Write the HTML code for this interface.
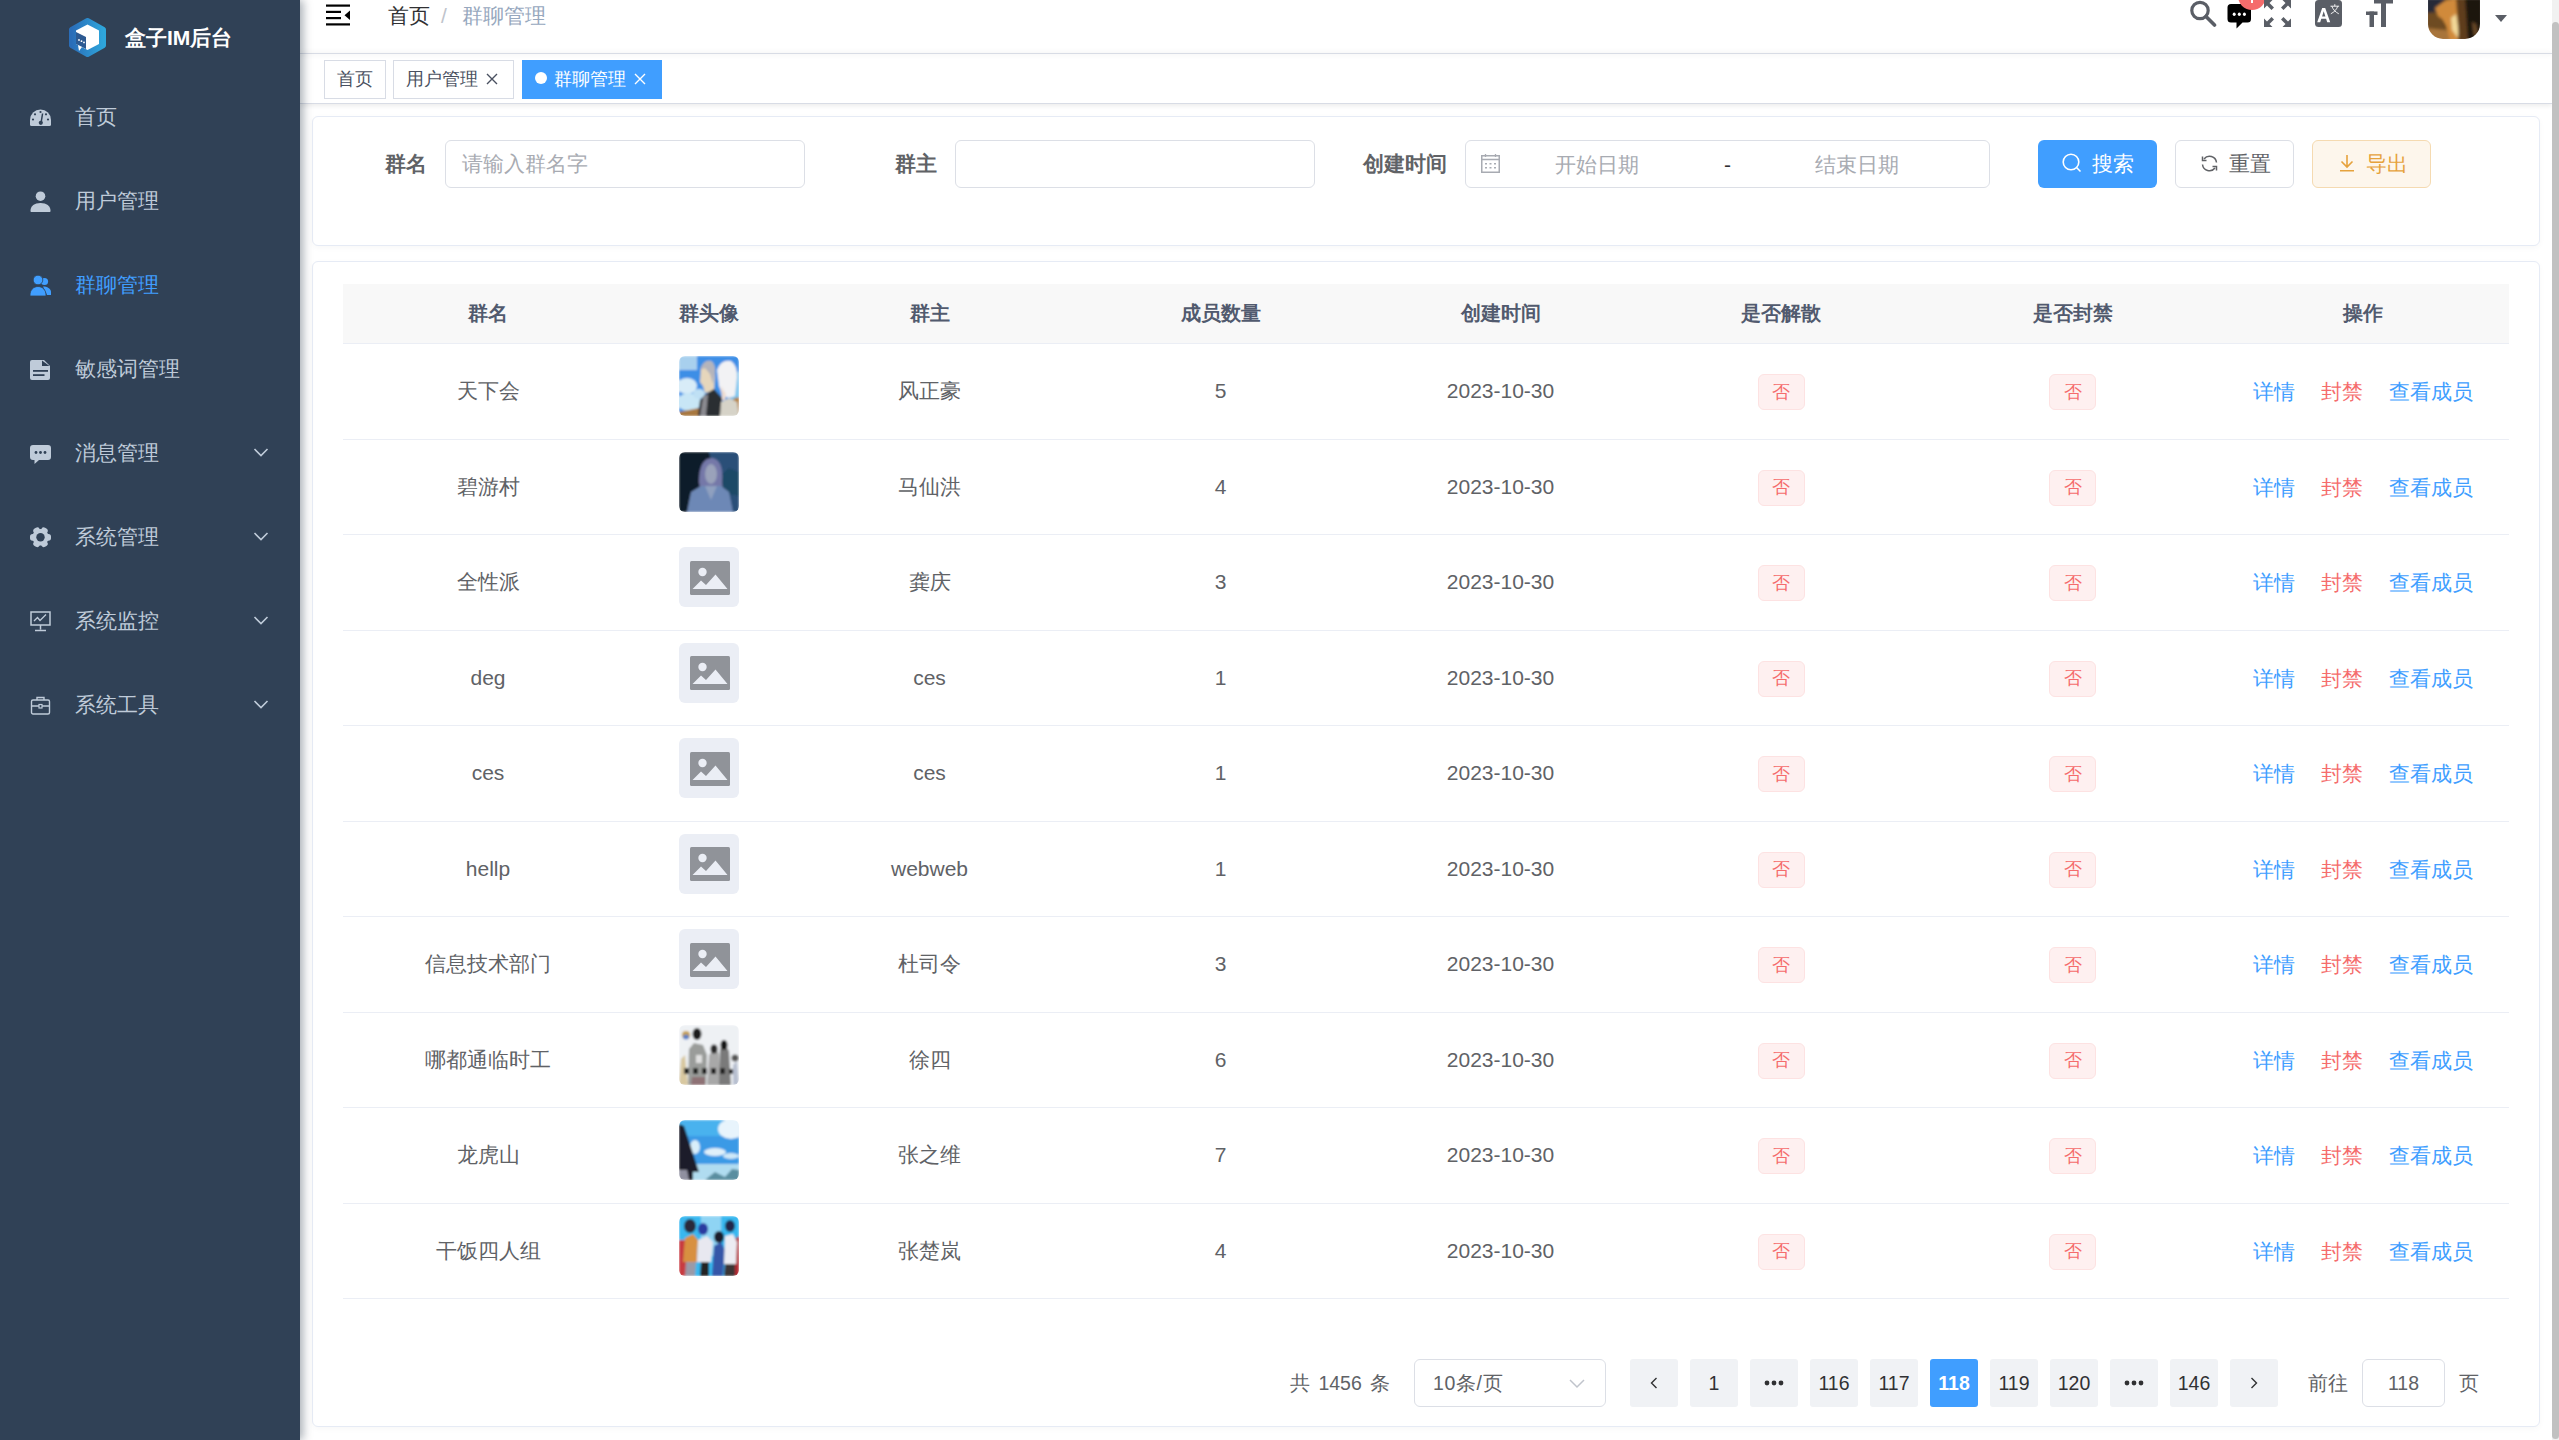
<!DOCTYPE html>
<html><head><meta charset="utf-8">
<style>
*{box-sizing:border-box;margin:0;padding:0}
html,body{width:2559px;height:1440px;overflow:hidden;background:#fff}
body{position:relative;font-family:"Liberation Sans",sans-serif;color:#606266}
.a{position:absolute}
.t{position:absolute;white-space:nowrap;line-height:1}
#side{left:0;top:0;width:300px;height:1440px;background:#304156;box-shadow:3px 0 9px rgba(0,21,41,.35);z-index:5}
.mi{position:absolute;left:0;width:300px;height:84px}
.mi svg.ic{position:absolute;left:30px;top:32px;width:21px;height:21px}
.mi .tx{position:absolute;left:75px;top:31px;font-size:21px;line-height:21px;color:#bfcbd9;white-space:nowrap}
.mi .ch{position:absolute;left:253px;top:35px;width:16px;height:12px}
</style></head>
<body>
<!-- SIDEBAR -->
<div id="side" class="a">
  <svg class="a" style="left:68px;top:18px" width="39" height="39" viewBox="0 0 39 39">
    <defs><linearGradient id="lg" x1="0" y1="0" x2="1" y2="0"><stop offset="0" stop-color="#2a6db8"/><stop offset="1" stop-color="#2ea6dc"/></linearGradient></defs>
    <polygon points="19.5,2.5 35.5,11.5 35.5,27.5 19.5,36.5 3.5,27.5 3.5,11.5" fill="url(#lg)" stroke="url(#lg)" stroke-width="5" stroke-linejoin="round"/>
    <polygon points="19.5,6.5 31,12.5 31,26 19.5,32 8,26 8,12.5" fill="#fff"/>
    <polygon points="8,14 18,19 18,31 8,26" fill="#2d5a92"/>
    <polygon points="10,27 14,29 11,33" fill="#fff"/>
    <circle cx="11" cy="22" r="0.9" fill="#fff"/><circle cx="13.5" cy="23.2" r="0.9" fill="#fff"/><circle cx="16" cy="24.4" r="0.9" fill="#fff"/>
  </svg>
  <div class="t" style="left:125px;top:27px;font-size:21px;line-height:21px;font-weight:bold;color:#fff">盒子IM后台</div>

  <div class="mi" style="top:75px">
    <svg class="ic" viewBox="0 0 21 21"><path d="M0 13A10.5 10.5 0 0 1 21 13V17.5Q21 19 19.5 19H1.5Q0 19 0 17.5Z" fill="#bfcbd9"/><circle cx="10.5" cy="5" r="1.1" fill="#304156"/><circle cx="5" cy="7.3" r="1.1" fill="#304156"/><circle cx="16" cy="7.3" r="1.1" fill="#304156"/><circle cx="3" cy="12.5" r="1.1" fill="#304156"/><circle cx="18" cy="12.5" r="1.1" fill="#304156"/><path d="M12.6 6.5L11.2 15" stroke="#304156" stroke-width="1.5"/><circle cx="10.8" cy="15.8" r="2.1" fill="#304156"/></svg>
    <div class="tx">首页</div>
  </div>
  <div class="mi" style="top:159px">
    <svg class="ic" viewBox="0 0 21 21"><circle cx="10.5" cy="5.2" r="4.8" fill="#bfcbd9"/><path d="M0.5 19.5c0-4.5 4-7.5 10-7.5s10 3 10 7.5v0.5c0 0.6-0.4 1-1 1h-18c-0.6 0-1-0.4-1-1z" fill="#bfcbd9"/></svg>
    <div class="tx">用户管理</div>
  </div>
  <div class="mi" style="top:243px">
    <svg class="ic" viewBox="0 0 21 21"><circle cx="14.5" cy="6.5" r="3.6" fill="#409EFF"/><path d="M13 11.5c4 0 8 2 8 5.5v3h-4z" fill="#409EFF"/><circle cx="8" cy="5" r="4.8" fill="#409EFF" stroke="#304156" stroke-width="0.8"/><path d="M0 20c0-5 3.5-8.5 8-8.5s8 3.5 8 8.5v1H0z" fill="#409EFF" stroke="#304156" stroke-width="0.8"/></svg>
    <div class="tx" style="color:#409EFF">群聊管理</div>
  </div>
  <div class="mi" style="top:327px">
    <svg class="ic" viewBox="0 0 21 21"><path d="M2 1h12l6 6v12a2 2 0 0 1-2 2H2a2 2 0 0 1-2-2V3a2 2 0 0 1 2-2z" fill="#bfcbd9"/><path d="M12 1.5v5.5h7.5z" fill="#304156"/><rect x="3" y="11" width="15" height="1.8" fill="#304156"/><rect x="3" y="15.2" width="11.5" height="1.8" fill="#304156"/></svg>
    <div class="tx">敏感词管理</div>
  </div>
  <div class="mi" style="top:411px">
    <svg class="ic" viewBox="0 0 21 21"><path d="M3 2h15a3 3 0 0 1 3 3v9a3 3 0 0 1-3 3H9l-4.5 4v-4H3a3 3 0 0 1-3-3V5a3 3 0 0 1 3-3z" fill="#bfcbd9"/><circle cx="6" cy="9.5" r="1.4" fill="#304156"/><circle cx="10.5" cy="9.5" r="1.4" fill="#304156"/><circle cx="15" cy="9.5" r="1.4" fill="#304156"/></svg>
    <div class="tx">消息管理</div>
    <svg class="ch" viewBox="0 0 16 12"><path d="M1.5 3L8 9.5L14.5 3" fill="none" stroke="#bfcbd9" stroke-width="1.6"/></svg>
  </div>
  <div class="mi" style="top:495px">
    <svg class="ic" viewBox="0 0 21 21"><g fill="#bfcbd9"><circle cx="10.5" cy="10.3" r="8.3"/><rect x="14.6" y="6.9" width="6.4" height="6.8" rx="2.6" transform="rotate(0 10.5 10.3)"/><rect x="14.6" y="6.9" width="6.4" height="6.8" rx="2.6" transform="rotate(60 10.5 10.3)"/><rect x="14.6" y="6.9" width="6.4" height="6.8" rx="2.6" transform="rotate(120 10.5 10.3)"/><rect x="14.6" y="6.9" width="6.4" height="6.8" rx="2.6" transform="rotate(180 10.5 10.3)"/><rect x="14.6" y="6.9" width="6.4" height="6.8" rx="2.6" transform="rotate(240 10.5 10.3)"/><rect x="14.6" y="6.9" width="6.4" height="6.8" rx="2.6" transform="rotate(300 10.5 10.3)"/></g><circle cx="10.5" cy="10.3" r="4.2" fill="#304156"/></svg>
    <div class="tx">系统管理</div>
    <svg class="ch" viewBox="0 0 16 12"><path d="M1.5 3L8 9.5L14.5 3" fill="none" stroke="#bfcbd9" stroke-width="1.6"/></svg>
  </div>
  <div class="mi" style="top:579px">
    <svg class="ic" viewBox="0 0 21 21"><rect x="1" y="1" width="19" height="13" fill="none" stroke="#bfcbd9" stroke-width="1.5"/><path d="M4 10l3.5-3.5 2.5 3 6-6" fill="none" stroke="#bfcbd9" stroke-width="1.3"/><path d="M10.5 14v4.5M5 19.5h11" stroke="#bfcbd9" stroke-width="1.5"/></svg>
    <div class="tx">系统监控</div>
    <svg class="ch" viewBox="0 0 16 12"><path d="M1.5 3L8 9.5L14.5 3" fill="none" stroke="#bfcbd9" stroke-width="1.6"/></svg>
  </div>
  <div class="mi" style="top:663px">
    <svg class="ic" viewBox="0 0 21 21"><rect x="1.5" y="5" width="18" height="14" rx="1.5" fill="none" stroke="#bfcbd9" stroke-width="1.4"/><path d="M7 5V2.5h7V5M1.5 11h18" fill="none" stroke="#bfcbd9" stroke-width="1.4"/><rect x="9" y="9.5" width="3" height="3.5" fill="#304156" stroke="#bfcbd9" stroke-width="1.2"/></svg>
    <div class="tx">系统工具</div>
    <svg class="ch" viewBox="0 0 16 12"><path d="M1.5 3L8 9.5L14.5 3" fill="none" stroke="#bfcbd9" stroke-width="1.6"/></svg>
  </div>
</div>

<!-- MAIN -->
<!-- NAVBAR -->
<div class="a" style="left:300px;top:0;width:2252px;height:53px;background:#fff"></div>
<svg class="a" style="left:326px;top:4px" width="24" height="22" viewBox="0 0 24 22"><rect x="0" y="0.5" width="24" height="2.2" fill="#000"/><rect x="0" y="6.8" width="15" height="2.2" fill="#000"/><rect x="0" y="13" width="15" height="2.2" fill="#000"/><rect x="0" y="19.3" width="24" height="2.2" fill="#000"/><path d="M24 6.5v9.5l-5.5-4.75z" fill="#000"/></svg>
<div class="t" style="left:388px;top:5px;font-size:21px;line-height:21px;color:#303133">首页</div>
<div class="t" style="left:441px;top:5px;font-size:21px;line-height:21px;color:#c0c4cc">/</div>
<div class="t" style="left:462px;top:5px;font-size:21px;line-height:21px;color:#97a8be">群聊管理</div>
<!-- right icons -->
<svg class="a" style="left:2189px;top:0px" width="28" height="28" viewBox="0 0 28 28"><circle cx="11" cy="10.5" r="8.2" fill="none" stroke="#5a5e66" stroke-width="3.2"/><path d="M17 16.5l8.5 8.5" stroke="#5a5e66" stroke-width="3.6" stroke-linecap="round"/></svg>
<svg class="a" style="left:2227px;top:3px" width="26" height="26" viewBox="0 0 26 26"><path d="M4 1h16.5a3.5 3.5 0 0 1 3.5 3.5v11.5a3.5 3.5 0 0 1-3.5 3.5H15.5l-6 6v-6H4A3.5 3.5 0 0 1 0.5 16V4.5A3.5 3.5 0 0 1 4 1z" fill="#000"/><ellipse cx="7.2" cy="11.3" rx="1.5" ry="1.8" fill="#fff"/><ellipse cx="12.3" cy="11.3" rx="1.5" ry="1.8" fill="#fff"/><ellipse cx="17.4" cy="11.3" rx="1.5" ry="1.8" fill="#fff"/></svg>
<div class="a" style="left:2238px;top:-18px;width:28px;height:28px;border-radius:50%;background:#f56c6c"></div>
<div class="a" style="left:2251px;top:0px;width:2px;height:3px;background:#fff"></div>
<svg class="a" style="left:2264px;top:0px" width="28" height="27" viewBox="0 0 28 27"><g fill="#5a5e66"><path d="M0 0h8.5l-3 3 4.5 4.5-2.5 2.5L3 5.5 0 8.5z"/><path d="M27 0h-8.5l3 3-4.5 4.5 2.5 2.5L24 5.5l3 3z"/><path d="M0 27h8.5l-3-3 4.5-4.5-2.5-2.5L3 21.5 0 18.5z"/><path d="M27 27h-8.5l3-3-4.5-4.5 2.5-2.5 4.5 4.5 3-3z"/></g></svg>
<svg class="a" style="left:2315px;top:0px" width="28" height="27" viewBox="0 0 28 27"><rect x="0" y="0" width="27" height="27" rx="3.5" fill="#5a5e66"/><path d="M2.2 22.2L7.2 8h3l5 14.2h-3l-1.1-3.4H6.3l-1.1 3.4zM7.1 16.4h3.3L8.7 11.2z" fill="#fff"/><path d="M15.5 6.2h8.6M19.8 4.2v2M16.8 6.2c1.4 3.6 3.6 5.8 7 7.6M22.8 6.2c-1.4 3.6-3.6 5.8-7 7.6" stroke="#fff" stroke-width="0.9" fill="none"/></svg>
<svg class="a" style="left:2366px;top:0px" width="28" height="27" viewBox="0 0 28 27"><g fill="#5a5e66"><rect x="8" y="0" width="19" height="3.5"/><rect x="15" y="0" width="5" height="27"/><rect x="0" y="11.5" width="11.5" height="3.5"/><rect x="3.5" y="11.5" width="4.5" height="15.5"/></g></svg>
<svg class="a" style="left:2428px;top:0px" width="52" height="39" viewBox="0 0 52 39"><defs><clipPath id="cl"><path d="M0 0H52V24A15 15 0 0 1 37 39H15A15 15 0 0 1 0 24Z"/></clipPath><filter id="fl" x="-10%" y="-10%" width="120%" height="120%"><feGaussianBlur stdDeviation="1.4"/></filter></defs><g clip-path="url(#cl)"><g filter="url(#fl)"><rect x="-2" y="-2" width="56" height="43" fill="#1a130c"/><rect x="-2" y="-2" width="18" height="16" fill="#252a38"/><path d="M-2 13L10 12L16 24L22 34L24 41H-2Z" fill="#6e4c22"/><path d="M-2 28L18 30L26 41H-2Z" fill="#a8743a"/><path d="M7 8L18 0L30 -2L32 20L30 41H22L18 26L14 19L10 16Z" fill="#d08a3a"/><path d="M23 18L28 14L31 30L30 38L24 30Z" fill="#f2d898"/><path d="M31 -2H54V41H31Z" fill="#1e150c"/><path d="M28 -2H37L40 41H31Z" fill="#5e3e1c"/><path d="M44 22L48 24L50 34L46 36Z" fill="#6a4a28"/></g></g></svg>
<svg class="a" style="left:2495px;top:15px" width="12" height="8" viewBox="0 0 12 8"><path d="M0 0h12L6 7z" fill="#5a5e66"/></svg>

<!-- TAGS VIEW -->
<div class="a" style="left:300px;top:54px;width:2252px;height:50px;background:#fff;border-bottom:1px solid #d8dce5;box-shadow:0 2px 5px 0 rgba(0,0,0,.08)"></div>
<div class="a" style="left:300px;top:53px;width:2252px;height:1px;background:#d8dce5;box-shadow:0 0 5px 1px rgba(0,0,0,.05)"></div>
<div class="a" style="left:324px;top:60px;width:62px;height:39px;border:1px solid #d8dce5;background:#fff"></div>
<div class="t" style="left:337px;top:70px;font-size:18px;line-height:18px;color:#495060">首页</div>
<div class="a" style="left:393px;top:60px;width:121px;height:39px;border:1px solid #d8dce5;background:#fff"></div>
<div class="t" style="left:406px;top:70px;font-size:18px;line-height:18px;color:#495060">用户管理</div>
<svg class="a" style="left:486px;top:73px" width="12" height="12" viewBox="0 0 12 12"><path d="M1 1l10 10M11 1L1 11" stroke="#495060" stroke-width="1.4"/></svg>
<div class="a" style="left:522px;top:60px;width:140px;height:39px;background:#409EFF"></div>
<div class="a" style="left:534.5px;top:72px;width:12px;height:12px;border-radius:50%;background:#fff"></div>
<div class="t" style="left:554px;top:70px;font-size:18px;line-height:18px;color:#fff">群聊管理</div>
<svg class="a" style="left:634px;top:73px" width="12" height="12" viewBox="0 0 12 12"><path d="M1 1l10 10M11 1L1 11" stroke="#fff" stroke-width="1.4"/></svg>

<!-- SEARCH CARD -->
<div class="a" style="left:312px;top:116px;width:2228px;height:130px;border:1px solid #e6ebf5;border-radius:6px;background:#fff;box-shadow:0 2px 6px rgba(0,0,0,.03)"></div>
<div class="t" style="left:385px;top:153px;font-size:21px;line-height:21px;font-weight:bold;color:#606266">群名</div>
<div class="a" style="left:445px;top:140px;width:360px;height:48px;border:1px solid #dcdfe6;border-radius:6px"></div>
<div class="t" style="left:462px;top:153px;font-size:21px;line-height:21px;color:#a8abb2">请输入群名字</div>
<div class="t" style="left:895px;top:153px;font-size:21px;line-height:21px;font-weight:bold;color:#606266">群主</div>
<div class="a" style="left:955px;top:140px;width:360px;height:48px;border:1px solid #dcdfe6;border-radius:6px"></div>
<div class="t" style="left:1363px;top:153px;font-size:21px;line-height:21px;font-weight:bold;color:#606266">创建时间</div>
<div class="a" style="left:1465px;top:140px;width:525px;height:48px;border:1px solid #dcdfe6;border-radius:6px"></div>
<svg class="a" style="left:1481px;top:154px" width="19" height="19" viewBox="0 0 19 19"><rect x="0.75" y="1.75" width="17.5" height="16.5" fill="none" stroke="#a8abb2" stroke-width="1.5"/><path d="M0.75 5.5h17.5M4.5 0v3M14.5 0v3" stroke="#a8abb2" stroke-width="1.3"/><g fill="#a8abb2"><rect x="4" y="9" width="2" height="1.5"/><rect x="8.5" y="9" width="2" height="1.5"/><rect x="13" y="9" width="2" height="1.5"/><rect x="4" y="13" width="2" height="1.5"/><rect x="8.5" y="13" width="2" height="1.5"/><rect x="13" y="13" width="2" height="1.5"/></g></svg>
<div class="t" style="left:1555px;top:154px;font-size:21px;line-height:21px;color:#a8abb2">开始日期</div>
<div class="t" style="left:1724px;top:154px;font-size:21px;line-height:21px;color:#303133">-</div>
<div class="t" style="left:1815px;top:154px;font-size:21px;line-height:21px;color:#a8abb2">结束日期</div>
<div class="a" style="left:2038px;top:140px;width:119px;height:48px;border-radius:6px;background:#409EFF"></div>
<svg class="a" style="left:2062px;top:153px" width="20" height="20" viewBox="0 0 20 20"><circle cx="9" cy="9" r="7.8" fill="none" stroke="#fff" stroke-width="1.6"/><path d="M14.5 14.5l4 4" stroke="#fff" stroke-width="1.6"/></svg>
<div class="t" style="left:2092px;top:153px;font-size:21px;line-height:21px;color:#fff">搜索</div>
<div class="a" style="left:2175px;top:140px;width:119px;height:48px;border-radius:6px;border:1px solid #dcdfe6;background:#fff"></div>
<svg class="a" style="left:2201px;top:155px" width="17" height="17" viewBox="0 0 17 17"><path d="M15.5 7.5A7 7 0 0 0 3 4M1.5 9.5A7 7 0 0 0 14 13" fill="none" stroke="#606266" stroke-width="1.5"/><path d="M1.5 1.5v4h4M15.5 15.5v-4h-4" fill="none" stroke="#606266" stroke-width="1.5"/></svg>
<div class="t" style="left:2229px;top:153px;font-size:21px;line-height:21px;color:#606266">重置</div>
<div class="a" style="left:2312px;top:140px;width:119px;height:48px;border-radius:6px;border:1px solid #f5dab1;background:#fdf6ec"></div>
<svg class="a" style="left:2339px;top:155px" width="16" height="17" viewBox="0 0 16 17"><path d="M8 0v12M2.5 6.5L8 12l5.5-5.5M1 15.8h14" fill="none" stroke="#e6a23c" stroke-width="1.6"/></svg>
<div class="t" style="left:2366px;top:153px;font-size:21px;line-height:21px;color:#e6a23c">导出</div>

<!-- TABLE CARD -->
<div class="a" style="left:312px;top:261px;width:2228px;height:1166px;border:1px solid #e6ebf5;border-radius:6px;background:#fff;box-shadow:0 2px 6px rgba(0,0,0,.03)"></div>
<!--TBL-->
<div class="a" style="left:343px;top:284px;width:2166px;height:59px;background:#f8f8f8"></div>
<div class="a" style="left:343px;top:343px;width:2166px;height:1px;background:#ebeef5"></div>
<div class="t" style="left:338px;width:300px;text-align:center;top:303px;font-size:19.5px;line-height:20px;font-weight:bold;color:#515a6e">群名</div>
<div class="t" style="left:559px;width:300px;text-align:center;top:303px;font-size:19.5px;line-height:20px;font-weight:bold;color:#515a6e">群头像</div>
<div class="t" style="left:779.5px;width:300px;text-align:center;top:303px;font-size:19.5px;line-height:20px;font-weight:bold;color:#515a6e">群主</div>
<div class="t" style="left:1070.5px;width:300px;text-align:center;top:303px;font-size:19.5px;line-height:20px;font-weight:bold;color:#515a6e">成员数量</div>
<div class="t" style="left:1350.5px;width:300px;text-align:center;top:303px;font-size:19.5px;line-height:20px;font-weight:bold;color:#515a6e">创建时间</div>
<div class="t" style="left:1631px;width:300px;text-align:center;top:303px;font-size:19.5px;line-height:20px;font-weight:bold;color:#515a6e">是否解散</div>
<div class="t" style="left:1922.5px;width:300px;text-align:center;top:303px;font-size:19.5px;line-height:20px;font-weight:bold;color:#515a6e">是否封禁</div>
<div class="t" style="left:2213px;width:300px;text-align:center;top:303px;font-size:19.5px;line-height:20px;font-weight:bold;color:#515a6e">操作</div>
<div class="t" style="left:338px;width:300px;text-align:center;top:380.25px;font-size:21px;line-height:22px;color:#606266">天下会</div>
<div class="t" style="left:779.5px;width:300px;text-align:center;top:380.25px;font-size:21px;line-height:22px;color:#606266">风正豪</div>
<div class="t" style="left:1070.5px;width:300px;text-align:center;top:380.25px;font-size:21px;line-height:22px;color:#606266">5</div>
<div class="t" style="left:1350.5px;width:300px;text-align:center;top:380.25px;font-size:21px;line-height:22px;color:#606266">2023-10-30</div>
<svg class="a" style="left:679px;top:356.00px" width="60" height="60" viewBox="0 0 60 60"><defs><clipPath id="c0"><rect width="60" height="60" rx="6"/></clipPath><filter id="f0" x="-10%" y="-10%" width="120%" height="120%"><feGaussianBlur stdDeviation="0.9"/></filter></defs><g clip-path="url(#c0)"><g filter="url(#f0)"><rect width="60" height="60" fill="#3d8ee6"/><rect x="0" y="0" width="18" height="14" fill="#a8d0ee"/><ellipse cx="8" cy="30" rx="10" ry="8" fill="#d8ecf8"/><ellipse cx="10" cy="46" rx="12" ry="9" fill="#c8e6f6"/><ellipse cx="20" cy="38" rx="6" ry="5" fill="#bfe0f4"/><rect x="52" y="16" width="8" height="30" fill="#7ac4ee"/><polygon points="0,56 20,52 20,60 0,60" fill="#a87840"/><polygon points="54,43 60,41 60,60 54,60" fill="#b48040"/><path d="M22 12 Q26 3 32 5 Q37 8 36 20 L35 34 L30 36 L26 37 L24 30 L21 26 Z" fill="#e6d6bc"/><path d="M21 14 Q24 4 31 5 Q37 7 36 18 L34 28 L31 18 L26 12 Z" fill="#b4b4bc"/><path d="M19 60 L21 44 L27 38 L35 33 L43 42 L43 60 Z" fill="#2c2d33"/><path d="M24 41 L29 38 L27 60 L21 60 Z" fill="#8a8a90"/><path d="M38 14 Q42 3 52 5 Q59 10 58 22 L56 40 L50 42 L44 40 L40 30 Z" fill="#f2f2f4"/><path d="M42 30 L47 38 L46 44 L43 44 Z" fill="#f0ddd0"/><path d="M41 60 L42 46 L50 42 L58 46 L60 60 Z" fill="#d6d3c8"/></g></g></svg>
<div class="a" style="left:1757.5px;top:374.25px;width:47px;height:36px;border:1px solid #fde2e2;border-radius:6px;background:#fef0f0"></div>
<div class="t" style="left:1731px;width:100px;text-align:center;top:382.75px;font-size:18px;line-height:19px;color:#f56c6c">否</div>
<div class="a" style="left:2049.0px;top:374.25px;width:47px;height:36px;border:1px solid #fde2e2;border-radius:6px;background:#fef0f0"></div>
<div class="t" style="left:2022.5px;width:100px;text-align:center;top:382.75px;font-size:18px;line-height:19px;color:#f56c6c">否</div>
<div class="t" style="left:2253px;top:381.25px;font-size:21px;line-height:22px;color:#409EFF">详情</div>
<div class="t" style="left:2321px;top:381.25px;font-size:21px;line-height:22px;color:#f56c6c">封禁</div>
<div class="t" style="left:2389px;top:381.25px;font-size:21px;line-height:22px;color:#409EFF">查看成员</div>
<div class="a" style="left:343px;top:439px;width:2166px;height:1px;background:#ebeef5"></div>
<div class="t" style="left:338px;width:300px;text-align:center;top:475.75px;font-size:21px;line-height:22px;color:#606266">碧游村</div>
<div class="t" style="left:779.5px;width:300px;text-align:center;top:475.75px;font-size:21px;line-height:22px;color:#606266">马仙洪</div>
<div class="t" style="left:1070.5px;width:300px;text-align:center;top:475.75px;font-size:21px;line-height:22px;color:#606266">4</div>
<div class="t" style="left:1350.5px;width:300px;text-align:center;top:475.75px;font-size:21px;line-height:22px;color:#606266">2023-10-30</div>
<svg class="a" style="left:679px;top:451.50px" width="60" height="60" viewBox="0 0 60 60"><defs><clipPath id="c1"><rect width="60" height="60" rx="6"/></clipPath><filter id="f1" x="-10%" y="-10%" width="120%" height="120%"><feGaussianBlur stdDeviation="0.9"/></filter></defs><g clip-path="url(#c1)"><g filter="url(#f1)"><rect width="60" height="60" fill="#0e1a2c"/><polygon points="30,0 60,0 60,60 44,60" fill="#2a5078"/><polygon points="38,26 50,16 60,20 60,44 40,40" fill="#1f4866"/><path d="M20 30 Q20 6 33 6 Q45 8 43 30 L44 42 L22 42 Z" fill="#7478a8"/><ellipse cx="32" cy="22" rx="6" ry="10" fill="#9aa2ba"/><path d="M8 60 L12 40 L22 34 L42 34 L50 40 L54 60 Z" fill="#6d88b6"/><path d="M26 34 L38 34 L32 48 Z" fill="#8fa0bf"/></g></g></svg>
<div class="a" style="left:1757.5px;top:469.75px;width:47px;height:36px;border:1px solid #fde2e2;border-radius:6px;background:#fef0f0"></div>
<div class="t" style="left:1731px;width:100px;text-align:center;top:478.25px;font-size:18px;line-height:19px;color:#f56c6c">否</div>
<div class="a" style="left:2049.0px;top:469.75px;width:47px;height:36px;border:1px solid #fde2e2;border-radius:6px;background:#fef0f0"></div>
<div class="t" style="left:2022.5px;width:100px;text-align:center;top:478.25px;font-size:18px;line-height:19px;color:#f56c6c">否</div>
<div class="t" style="left:2253px;top:476.75px;font-size:21px;line-height:22px;color:#409EFF">详情</div>
<div class="t" style="left:2321px;top:476.75px;font-size:21px;line-height:22px;color:#f56c6c">封禁</div>
<div class="t" style="left:2389px;top:476.75px;font-size:21px;line-height:22px;color:#409EFF">查看成员</div>
<div class="a" style="left:343px;top:534px;width:2166px;height:1px;background:#ebeef5"></div>
<div class="t" style="left:338px;width:300px;text-align:center;top:571.25px;font-size:21px;line-height:22px;color:#606266">全性派</div>
<div class="t" style="left:779.5px;width:300px;text-align:center;top:571.25px;font-size:21px;line-height:22px;color:#606266">龚庆</div>
<div class="t" style="left:1070.5px;width:300px;text-align:center;top:571.25px;font-size:21px;line-height:22px;color:#606266">3</div>
<div class="t" style="left:1350.5px;width:300px;text-align:center;top:571.25px;font-size:21px;line-height:22px;color:#606266">2023-10-30</div>
<div class="a" style="left:679px;top:547.00px;width:60px;height:60px;border-radius:6px;background:#ebeef5"><svg width="40" height="34" viewBox="0 0 40 34" style="position:absolute;left:10.5px;top:13.5px"><rect x="0" y="0" width="40" height="34" rx="1.5" fill="#909399"/><circle cx="12.5" cy="11" r="4.2" fill="#ebeef5"/><path d="M2.5 28l8.5-8.5 5 4.5 9.5-10.5 12 14.5z" fill="#ebeef5"/></svg></div>
<div class="a" style="left:1757.5px;top:565.25px;width:47px;height:36px;border:1px solid #fde2e2;border-radius:6px;background:#fef0f0"></div>
<div class="t" style="left:1731px;width:100px;text-align:center;top:573.75px;font-size:18px;line-height:19px;color:#f56c6c">否</div>
<div class="a" style="left:2049.0px;top:565.25px;width:47px;height:36px;border:1px solid #fde2e2;border-radius:6px;background:#fef0f0"></div>
<div class="t" style="left:2022.5px;width:100px;text-align:center;top:573.75px;font-size:18px;line-height:19px;color:#f56c6c">否</div>
<div class="t" style="left:2253px;top:572.25px;font-size:21px;line-height:22px;color:#409EFF">详情</div>
<div class="t" style="left:2321px;top:572.25px;font-size:21px;line-height:22px;color:#f56c6c">封禁</div>
<div class="t" style="left:2389px;top:572.25px;font-size:21px;line-height:22px;color:#409EFF">查看成员</div>
<div class="a" style="left:343px;top:630px;width:2166px;height:1px;background:#ebeef5"></div>
<div class="t" style="left:338px;width:300px;text-align:center;top:666.75px;font-size:21px;line-height:22px;color:#606266">deg</div>
<div class="t" style="left:779.5px;width:300px;text-align:center;top:666.75px;font-size:21px;line-height:22px;color:#606266">ces</div>
<div class="t" style="left:1070.5px;width:300px;text-align:center;top:666.75px;font-size:21px;line-height:22px;color:#606266">1</div>
<div class="t" style="left:1350.5px;width:300px;text-align:center;top:666.75px;font-size:21px;line-height:22px;color:#606266">2023-10-30</div>
<div class="a" style="left:679px;top:642.50px;width:60px;height:60px;border-radius:6px;background:#ebeef5"><svg width="40" height="34" viewBox="0 0 40 34" style="position:absolute;left:10.5px;top:13.5px"><rect x="0" y="0" width="40" height="34" rx="1.5" fill="#909399"/><circle cx="12.5" cy="11" r="4.2" fill="#ebeef5"/><path d="M2.5 28l8.5-8.5 5 4.5 9.5-10.5 12 14.5z" fill="#ebeef5"/></svg></div>
<div class="a" style="left:1757.5px;top:660.75px;width:47px;height:36px;border:1px solid #fde2e2;border-radius:6px;background:#fef0f0"></div>
<div class="t" style="left:1731px;width:100px;text-align:center;top:669.25px;font-size:18px;line-height:19px;color:#f56c6c">否</div>
<div class="a" style="left:2049.0px;top:660.75px;width:47px;height:36px;border:1px solid #fde2e2;border-radius:6px;background:#fef0f0"></div>
<div class="t" style="left:2022.5px;width:100px;text-align:center;top:669.25px;font-size:18px;line-height:19px;color:#f56c6c">否</div>
<div class="t" style="left:2253px;top:667.75px;font-size:21px;line-height:22px;color:#409EFF">详情</div>
<div class="t" style="left:2321px;top:667.75px;font-size:21px;line-height:22px;color:#f56c6c">封禁</div>
<div class="t" style="left:2389px;top:667.75px;font-size:21px;line-height:22px;color:#409EFF">查看成员</div>
<div class="a" style="left:343px;top:725px;width:2166px;height:1px;background:#ebeef5"></div>
<div class="t" style="left:338px;width:300px;text-align:center;top:762.25px;font-size:21px;line-height:22px;color:#606266">ces</div>
<div class="t" style="left:779.5px;width:300px;text-align:center;top:762.25px;font-size:21px;line-height:22px;color:#606266">ces</div>
<div class="t" style="left:1070.5px;width:300px;text-align:center;top:762.25px;font-size:21px;line-height:22px;color:#606266">1</div>
<div class="t" style="left:1350.5px;width:300px;text-align:center;top:762.25px;font-size:21px;line-height:22px;color:#606266">2023-10-30</div>
<div class="a" style="left:679px;top:738.00px;width:60px;height:60px;border-radius:6px;background:#ebeef5"><svg width="40" height="34" viewBox="0 0 40 34" style="position:absolute;left:10.5px;top:13.5px"><rect x="0" y="0" width="40" height="34" rx="1.5" fill="#909399"/><circle cx="12.5" cy="11" r="4.2" fill="#ebeef5"/><path d="M2.5 28l8.5-8.5 5 4.5 9.5-10.5 12 14.5z" fill="#ebeef5"/></svg></div>
<div class="a" style="left:1757.5px;top:756.25px;width:47px;height:36px;border:1px solid #fde2e2;border-radius:6px;background:#fef0f0"></div>
<div class="t" style="left:1731px;width:100px;text-align:center;top:764.75px;font-size:18px;line-height:19px;color:#f56c6c">否</div>
<div class="a" style="left:2049.0px;top:756.25px;width:47px;height:36px;border:1px solid #fde2e2;border-radius:6px;background:#fef0f0"></div>
<div class="t" style="left:2022.5px;width:100px;text-align:center;top:764.75px;font-size:18px;line-height:19px;color:#f56c6c">否</div>
<div class="t" style="left:2253px;top:763.25px;font-size:21px;line-height:22px;color:#409EFF">详情</div>
<div class="t" style="left:2321px;top:763.25px;font-size:21px;line-height:22px;color:#f56c6c">封禁</div>
<div class="t" style="left:2389px;top:763.25px;font-size:21px;line-height:22px;color:#409EFF">查看成员</div>
<div class="a" style="left:343px;top:821px;width:2166px;height:1px;background:#ebeef5"></div>
<div class="t" style="left:338px;width:300px;text-align:center;top:857.75px;font-size:21px;line-height:22px;color:#606266">hellp</div>
<div class="t" style="left:779.5px;width:300px;text-align:center;top:857.75px;font-size:21px;line-height:22px;color:#606266">webweb</div>
<div class="t" style="left:1070.5px;width:300px;text-align:center;top:857.75px;font-size:21px;line-height:22px;color:#606266">1</div>
<div class="t" style="left:1350.5px;width:300px;text-align:center;top:857.75px;font-size:21px;line-height:22px;color:#606266">2023-10-30</div>
<div class="a" style="left:679px;top:833.50px;width:60px;height:60px;border-radius:6px;background:#ebeef5"><svg width="40" height="34" viewBox="0 0 40 34" style="position:absolute;left:10.5px;top:13.5px"><rect x="0" y="0" width="40" height="34" rx="1.5" fill="#909399"/><circle cx="12.5" cy="11" r="4.2" fill="#ebeef5"/><path d="M2.5 28l8.5-8.5 5 4.5 9.5-10.5 12 14.5z" fill="#ebeef5"/></svg></div>
<div class="a" style="left:1757.5px;top:851.75px;width:47px;height:36px;border:1px solid #fde2e2;border-radius:6px;background:#fef0f0"></div>
<div class="t" style="left:1731px;width:100px;text-align:center;top:860.25px;font-size:18px;line-height:19px;color:#f56c6c">否</div>
<div class="a" style="left:2049.0px;top:851.75px;width:47px;height:36px;border:1px solid #fde2e2;border-radius:6px;background:#fef0f0"></div>
<div class="t" style="left:2022.5px;width:100px;text-align:center;top:860.25px;font-size:18px;line-height:19px;color:#f56c6c">否</div>
<div class="t" style="left:2253px;top:858.75px;font-size:21px;line-height:22px;color:#409EFF">详情</div>
<div class="t" style="left:2321px;top:858.75px;font-size:21px;line-height:22px;color:#f56c6c">封禁</div>
<div class="t" style="left:2389px;top:858.75px;font-size:21px;line-height:22px;color:#409EFF">查看成员</div>
<div class="a" style="left:343px;top:916px;width:2166px;height:1px;background:#ebeef5"></div>
<div class="t" style="left:338px;width:300px;text-align:center;top:953.25px;font-size:21px;line-height:22px;color:#606266">信息技术部门</div>
<div class="t" style="left:779.5px;width:300px;text-align:center;top:953.25px;font-size:21px;line-height:22px;color:#606266">杜司令</div>
<div class="t" style="left:1070.5px;width:300px;text-align:center;top:953.25px;font-size:21px;line-height:22px;color:#606266">3</div>
<div class="t" style="left:1350.5px;width:300px;text-align:center;top:953.25px;font-size:21px;line-height:22px;color:#606266">2023-10-30</div>
<div class="a" style="left:679px;top:929.00px;width:60px;height:60px;border-radius:6px;background:#ebeef5"><svg width="40" height="34" viewBox="0 0 40 34" style="position:absolute;left:10.5px;top:13.5px"><rect x="0" y="0" width="40" height="34" rx="1.5" fill="#909399"/><circle cx="12.5" cy="11" r="4.2" fill="#ebeef5"/><path d="M2.5 28l8.5-8.5 5 4.5 9.5-10.5 12 14.5z" fill="#ebeef5"/></svg></div>
<div class="a" style="left:1757.5px;top:947.25px;width:47px;height:36px;border:1px solid #fde2e2;border-radius:6px;background:#fef0f0"></div>
<div class="t" style="left:1731px;width:100px;text-align:center;top:955.75px;font-size:18px;line-height:19px;color:#f56c6c">否</div>
<div class="a" style="left:2049.0px;top:947.25px;width:47px;height:36px;border:1px solid #fde2e2;border-radius:6px;background:#fef0f0"></div>
<div class="t" style="left:2022.5px;width:100px;text-align:center;top:955.75px;font-size:18px;line-height:19px;color:#f56c6c">否</div>
<div class="t" style="left:2253px;top:954.25px;font-size:21px;line-height:22px;color:#409EFF">详情</div>
<div class="t" style="left:2321px;top:954.25px;font-size:21px;line-height:22px;color:#f56c6c">封禁</div>
<div class="t" style="left:2389px;top:954.25px;font-size:21px;line-height:22px;color:#409EFF">查看成员</div>
<div class="a" style="left:343px;top:1012px;width:2166px;height:1px;background:#ebeef5"></div>
<div class="t" style="left:338px;width:300px;text-align:center;top:1048.75px;font-size:21px;line-height:22px;color:#606266">哪都通临时工</div>
<div class="t" style="left:779.5px;width:300px;text-align:center;top:1048.75px;font-size:21px;line-height:22px;color:#606266">徐四</div>
<div class="t" style="left:1070.5px;width:300px;text-align:center;top:1048.75px;font-size:21px;line-height:22px;color:#606266">6</div>
<div class="t" style="left:1350.5px;width:300px;text-align:center;top:1048.75px;font-size:21px;line-height:22px;color:#606266">2023-10-30</div>
<svg class="a" style="left:679px;top:1024.50px" width="60" height="60" viewBox="0 0 60 60"><defs><clipPath id="c7"><rect width="60" height="60" rx="6"/></clipPath><filter id="f7" x="-10%" y="-10%" width="120%" height="120%"><feGaussianBlur stdDeviation="0.9"/></filter></defs><g clip-path="url(#c7)"><g filter="url(#f7)"><rect width="60" height="60" fill="#eef1f4"/><ellipse cx="7" cy="10" rx="4" ry="4" fill="#c8a050"/><ellipse cx="7" cy="12" rx="3" ry="2.5" fill="#5a80c8"/><path d="M9 60 L10 24 L15 18 L24 20 L28 30 L27 60 Z" fill="#9a9c9a"/><ellipse cx="18" cy="9" rx="4.5" ry="6" fill="#1e1e1e"/><rect x="17" y="30" width="6" height="8" fill="#e0e0e0"/><path d="M28 60 L30 30 L35 24 L40 28 L42 60 Z" fill="#a8a8a8"/><ellipse cx="35" cy="24" rx="3.5" ry="4.5" fill="#2a2a2a"/><path d="M40 60 L41 24 L45 18 L50 26 L52 60 Z" fill="#7a7a7a"/><ellipse cx="45" cy="20" rx="3.5" ry="5" fill="#181818"/><path d="M54 60 L54 40 L58 36 L60 60 Z" fill="#b8c0d0"/><ellipse cx="56" cy="33" rx="3.5" ry="3.5" fill="#555"/><path d="M0 60 L2 34 L6 30 L9 60 Z" fill="#d8c8a0"/><g fill="#222"><rect x="5" y="43" width="5" height="6"/><rect x="14" y="43" width="5" height="6"/><rect x="23" y="43" width="5" height="6"/><rect x="32" y="43" width="5" height="6"/><rect x="41" y="43" width="5" height="6"/><rect x="50" y="44" width="4" height="5"/></g><path d="M12 60 L13 52 L26 52 L26 60 Z" fill="#8e7274"/></g></g></svg>
<div class="a" style="left:1757.5px;top:1042.75px;width:47px;height:36px;border:1px solid #fde2e2;border-radius:6px;background:#fef0f0"></div>
<div class="t" style="left:1731px;width:100px;text-align:center;top:1051.25px;font-size:18px;line-height:19px;color:#f56c6c">否</div>
<div class="a" style="left:2049.0px;top:1042.75px;width:47px;height:36px;border:1px solid #fde2e2;border-radius:6px;background:#fef0f0"></div>
<div class="t" style="left:2022.5px;width:100px;text-align:center;top:1051.25px;font-size:18px;line-height:19px;color:#f56c6c">否</div>
<div class="t" style="left:2253px;top:1049.75px;font-size:21px;line-height:22px;color:#409EFF">详情</div>
<div class="t" style="left:2321px;top:1049.75px;font-size:21px;line-height:22px;color:#f56c6c">封禁</div>
<div class="t" style="left:2389px;top:1049.75px;font-size:21px;line-height:22px;color:#409EFF">查看成员</div>
<div class="a" style="left:343px;top:1107px;width:2166px;height:1px;background:#ebeef5"></div>
<div class="t" style="left:338px;width:300px;text-align:center;top:1144.25px;font-size:21px;line-height:22px;color:#606266">龙虎山</div>
<div class="t" style="left:779.5px;width:300px;text-align:center;top:1144.25px;font-size:21px;line-height:22px;color:#606266">张之维</div>
<div class="t" style="left:1070.5px;width:300px;text-align:center;top:1144.25px;font-size:21px;line-height:22px;color:#606266">7</div>
<div class="t" style="left:1350.5px;width:300px;text-align:center;top:1144.25px;font-size:21px;line-height:22px;color:#606266">2023-10-30</div>
<svg class="a" style="left:679px;top:1120.00px" width="60" height="60" viewBox="0 0 60 60"><defs><clipPath id="c8"><rect width="60" height="60" rx="6"/></clipPath><filter id="f8" x="-10%" y="-10%" width="120%" height="120%"><feGaussianBlur stdDeviation="0.9"/></filter></defs><g clip-path="url(#c8)"><g filter="url(#f8)"><rect width="60" height="60" fill="#3a9ae6"/><rect y="0" width="60" height="16" fill="#48b2ee"/><ellipse cx="52" cy="9" rx="13" ry="10" fill="#e8f4fc"/><ellipse cx="36" cy="32" rx="11" ry="4" fill="#dff0fa"/><ellipse cx="16" cy="27" rx="5" ry="7" fill="#d8eefa"/><ellipse cx="52" cy="36" rx="8" ry="3" fill="#cfe8f8"/><rect y="44" width="60" height="16" fill="#b0dcf0"/><polygon points="26,60 36,52 46,57 53,49 60,50 60,60" fill="#5a8ea0"/><polygon points="0,4 5,6 20,52 14,52 14,60 0,60" fill="#1c1c2c"/><polygon points="0,50 8,50 10,60 0,60" fill="#9090a0"/></g></g></svg>
<div class="a" style="left:1757.5px;top:1138.25px;width:47px;height:36px;border:1px solid #fde2e2;border-radius:6px;background:#fef0f0"></div>
<div class="t" style="left:1731px;width:100px;text-align:center;top:1146.75px;font-size:18px;line-height:19px;color:#f56c6c">否</div>
<div class="a" style="left:2049.0px;top:1138.25px;width:47px;height:36px;border:1px solid #fde2e2;border-radius:6px;background:#fef0f0"></div>
<div class="t" style="left:2022.5px;width:100px;text-align:center;top:1146.75px;font-size:18px;line-height:19px;color:#f56c6c">否</div>
<div class="t" style="left:2253px;top:1145.25px;font-size:21px;line-height:22px;color:#409EFF">详情</div>
<div class="t" style="left:2321px;top:1145.25px;font-size:21px;line-height:22px;color:#f56c6c">封禁</div>
<div class="t" style="left:2389px;top:1145.25px;font-size:21px;line-height:22px;color:#409EFF">查看成员</div>
<div class="a" style="left:343px;top:1203px;width:2166px;height:1px;background:#ebeef5"></div>
<div class="t" style="left:338px;width:300px;text-align:center;top:1239.75px;font-size:21px;line-height:22px;color:#606266">干饭四人组</div>
<div class="t" style="left:779.5px;width:300px;text-align:center;top:1239.75px;font-size:21px;line-height:22px;color:#606266">张楚岚</div>
<div class="t" style="left:1070.5px;width:300px;text-align:center;top:1239.75px;font-size:21px;line-height:22px;color:#606266">4</div>
<div class="t" style="left:1350.5px;width:300px;text-align:center;top:1239.75px;font-size:21px;line-height:22px;color:#606266">2023-10-30</div>
<svg class="a" style="left:679px;top:1215.50px" width="60" height="60" viewBox="0 0 60 60"><defs><clipPath id="c9"><rect width="60" height="60" rx="6"/></clipPath><filter id="f9" x="-10%" y="-10%" width="120%" height="120%"><feGaussianBlur stdDeviation="0.9"/></filter></defs><g clip-path="url(#c9)"><g filter="url(#f9)"><rect width="60" height="60" fill="#38b8f0"/><rect x="22" y="0" width="20" height="40" fill="#8fd4f4"/><polygon points="0,24 8,24 8,60 0,60" fill="#c83a40"/><polygon points="52,26 60,20 60,60 52,60" fill="#b02a30"/><path d="M4 46 L6 22 L14 18 L19 24 L18 46 Z" fill="#d89040"/><ellipse cx="11" cy="10" rx="6" ry="7" fill="#2a2a3a"/><path d="M6 60 L7 46 L17 46 L16 60 Z" fill="#9a9aa8"/><path d="M18 46 L19 24 L28 20 L34 26 L32 46 Z" fill="#e8e8f0"/><ellipse cx="24" cy="13" rx="5" ry="6" fill="#2a3aa0"/><path d="M21 60 L22 46 L30 46 L30 60 Z" fill="#222"/><path d="M33 60 L35 30 L42 26 L46 34 L44 60 Z" fill="#3456a8"/><ellipse cx="40" cy="21" rx="5" ry="6" fill="#1a1a2a"/><path d="M45 48 L46 20 L54 18 L58 26 L57 48 Z" fill="#ececf2"/><ellipse cx="51" cy="10" rx="5" ry="6" fill="#22284a"/><path d="M45 60 L46 48 L56 48 L56 60 Z" fill="#3a3434"/></g></g></svg>
<div class="a" style="left:1757.5px;top:1233.75px;width:47px;height:36px;border:1px solid #fde2e2;border-radius:6px;background:#fef0f0"></div>
<div class="t" style="left:1731px;width:100px;text-align:center;top:1242.25px;font-size:18px;line-height:19px;color:#f56c6c">否</div>
<div class="a" style="left:2049.0px;top:1233.75px;width:47px;height:36px;border:1px solid #fde2e2;border-radius:6px;background:#fef0f0"></div>
<div class="t" style="left:2022.5px;width:100px;text-align:center;top:1242.25px;font-size:18px;line-height:19px;color:#f56c6c">否</div>
<div class="t" style="left:2253px;top:1240.75px;font-size:21px;line-height:22px;color:#409EFF">详情</div>
<div class="t" style="left:2321px;top:1240.75px;font-size:21px;line-height:22px;color:#f56c6c">封禁</div>
<div class="t" style="left:2389px;top:1240.75px;font-size:21px;line-height:22px;color:#409EFF">查看成员</div>
<div class="a" style="left:343px;top:1298px;width:2166px;height:1px;background:#ebeef5"></div>
<div class="t" style="left:1290px;top:1373px;font-size:19.5px;line-height:20px;color:#606266;word-spacing:3px">共 1456 条</div>
<div class="a" style="left:1414px;top:1359px;width:192px;height:48px;border:1px solid #dcdfe6;border-radius:6px;background:#fff"></div>
<div class="t" style="left:1433px;top:1373px;font-size:19.5px;line-height:20px;color:#606266;letter-spacing:0.6px">10条/页</div>
<svg class="a" style="left:1569px;top:1378px" width="16" height="11" viewBox="0 0 16 11"><path d="M1 2l7 7 7-7" fill="none" stroke="#c0c4cc" stroke-width="1.5"/></svg>
<div class="a" style="left:1630px;top:1359px;width:48px;height:48px;border-radius:3px;background:#f0f2f5"></div>
<svg class="a" style="left:1648px;top:1376px" width="12" height="14" viewBox="0 0 12 14"><path d="M8.5 2L3.5 7l5 5" fill="none" stroke="#303133" stroke-width="1.4"/></svg>
<div class="a" style="left:1690px;top:1359px;width:48px;height:48px;border-radius:3px;background:#f0f2f5"></div>
<div class="t" style="left:1690px;width:48px;text-align:center;top:1373px;font-size:19.5px;line-height:20px;color:#303133;font-weight:normal">1</div>
<div class="a" style="left:1750px;top:1359px;width:48px;height:48px;border-radius:3px;background:#f0f2f5"></div>
<svg class="a" style="left:1764px;top:1380px" width="20" height="6" viewBox="0 0 20 6"><circle cx="3" cy="3" r="2.4" fill="#303133"/><circle cx="10" cy="3" r="2.4" fill="#303133"/><circle cx="17" cy="3" r="2.4" fill="#303133"/></svg>
<div class="a" style="left:1810px;top:1359px;width:48px;height:48px;border-radius:3px;background:#f0f2f5"></div>
<div class="t" style="left:1810px;width:48px;text-align:center;top:1373px;font-size:19.5px;line-height:20px;color:#303133;font-weight:normal">116</div>
<div class="a" style="left:1870px;top:1359px;width:48px;height:48px;border-radius:3px;background:#f0f2f5"></div>
<div class="t" style="left:1870px;width:48px;text-align:center;top:1373px;font-size:19.5px;line-height:20px;color:#303133;font-weight:normal">117</div>
<div class="a" style="left:1930px;top:1359px;width:48px;height:48px;border-radius:3px;background:#409EFF"></div>
<div class="t" style="left:1930px;width:48px;text-align:center;top:1373px;font-size:19.5px;line-height:20px;color:#fff;font-weight:bold">118</div>
<div class="a" style="left:1990px;top:1359px;width:48px;height:48px;border-radius:3px;background:#f0f2f5"></div>
<div class="t" style="left:1990px;width:48px;text-align:center;top:1373px;font-size:19.5px;line-height:20px;color:#303133;font-weight:normal">119</div>
<div class="a" style="left:2050px;top:1359px;width:48px;height:48px;border-radius:3px;background:#f0f2f5"></div>
<div class="t" style="left:2050px;width:48px;text-align:center;top:1373px;font-size:19.5px;line-height:20px;color:#303133;font-weight:normal">120</div>
<div class="a" style="left:2110px;top:1359px;width:48px;height:48px;border-radius:3px;background:#f0f2f5"></div>
<svg class="a" style="left:2124px;top:1380px" width="20" height="6" viewBox="0 0 20 6"><circle cx="3" cy="3" r="2.4" fill="#303133"/><circle cx="10" cy="3" r="2.4" fill="#303133"/><circle cx="17" cy="3" r="2.4" fill="#303133"/></svg>
<div class="a" style="left:2170px;top:1359px;width:48px;height:48px;border-radius:3px;background:#f0f2f5"></div>
<div class="t" style="left:2170px;width:48px;text-align:center;top:1373px;font-size:19.5px;line-height:20px;color:#303133;font-weight:normal">146</div>
<div class="a" style="left:2230px;top:1359px;width:48px;height:48px;border-radius:3px;background:#f0f2f5"></div>
<svg class="a" style="left:2248px;top:1376px" width="12" height="14" viewBox="0 0 12 14"><path d="M3.5 2l5 5-5 5" fill="none" stroke="#303133" stroke-width="1.4"/></svg>
<div class="t" style="left:2308px;top:1373px;font-size:19.5px;line-height:20px;color:#606266">前往</div>
<div class="a" style="left:2362px;top:1359px;width:83px;height:48px;border:1px solid #dcdfe6;border-radius:6px;background:#fff"></div>
<div class="t" style="left:2362px;width:83px;text-align:center;top:1373px;font-size:19.5px;line-height:20px;color:#606266">118</div>
<div class="t" style="left:2459px;top:1373px;font-size:19.5px;line-height:20px;color:#606266">页</div>
<!--/TBL-->


<!-- SCROLLBAR -->
<div class="a" style="left:2552px;top:0;width:7px;height:1440px;background:#f1f1f1"></div>
<div class="a" style="left:2552px;top:22px;width:7px;height:1417px;background:#c1c1c1;border-radius:4px"></div>
</body></html>
